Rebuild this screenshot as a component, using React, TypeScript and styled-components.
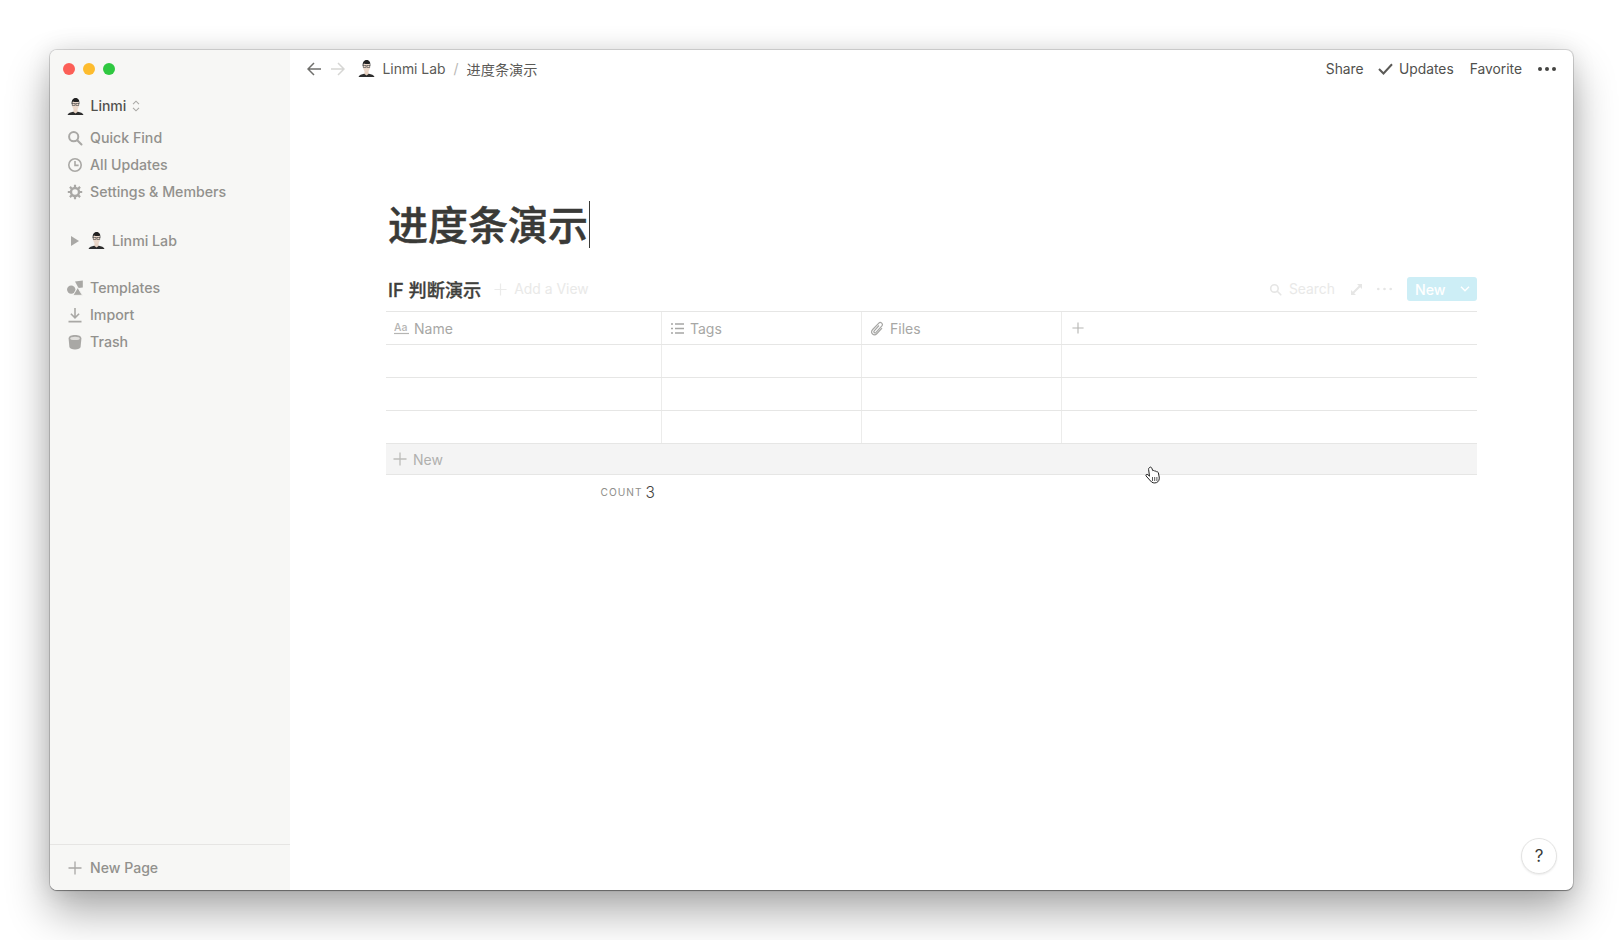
import React from "react";
import styled, { createGlobalStyle } from "styled-components";

const Global = createGlobalStyle`
  html, body { margin: 0; padding: 0; height: 100%; background: #fff; overflow: hidden; }
  body { font-family: Inter, "Noto Sans CJK SC", "Noto Sans", sans-serif; -webkit-font-smoothing: antialiased; }
`;
const Page = styled.div`
  width: 1623px; height: 940px; box-sizing: border-box; padding: 50px; background: #fff;
`;
const Win = styled.div`
  position: relative; width: 1523px; height: 840px; display: flex; border-radius: 7px; overflow: hidden;
  background: #fff;
  box-shadow: 0 0 0 1px rgba(0,0,0,.13), 0 1px 1px rgba(0,0,0,.35), 0 22px 44px rgba(0,0,0,.33), 0 0 24px rgba(0,0,0,.1);
`;
const Side = styled.aside`
  width: 240px; flex: none; background: #f7f7f5; display: flex; flex-direction: column;
`;
const Traffic = styled.div`
  height: 38px; display: flex; align-items: center; gap: 7.5px; padding-left: 12.5px; flex: none;
`;
const Dot = styled.span<{ $c: string }>`
  width: 12.5px; height: 12.5px; border-radius: 50%; background: ${p => p.$c};
`;
const Workspace = styled.div`
  height: 36px; flex: none; display: flex; align-items: center; padding-left: 17px;
  font-size: 14px; font-weight: 500; color: #52514d;
`;
const WsName = styled.span`margin: 0 6px 1px 6.5px;`;
const NavRow = styled.div<{ $indent?: boolean }>`
  height: 27px; flex: none; display: flex; align-items: center; gap: 7px;
  padding-left: ${p => (p.$indent ? 21 : 17)}px;
  font-size: 14.2px; font-weight: 500; color: #92918d;
`;
const NavGroup = styled.div<{ $mt: number }>`
  margin-top: ${p => p.$mt}px; flex: none; display: flex; flex-direction: column;
`;
const TreeIcon = styled.span`display: flex; margin-left: 2px;`;
const Spacer = styled.div`flex: 1;`;
const SideFoot = styled.div`
  height: 46px; flex: none; box-sizing: border-box; border-top: 1px solid #e6e5e3; display: flex; align-items: center; gap: 8px;
  padding-left: 18px; font-size: 14.1px; font-weight: 500; color: #92918d;
`;
const Main = styled.main`flex: 1; min-width: 0; display: flex; flex-direction: column;`;
const TopBar = styled.header`
  height: 37px; margin-bottom: 1px; flex: none; display: flex; align-items: center; justify-content: space-between; padding: 0 17.5px 0 17px;
`;
const Crumbs = styled.div`
  display: flex; align-items: center; font-size: 13.9px; color: #5b5a57;
`;
const CrumbArrows = styled.div`display: flex; align-items: center; gap: 10px; margin-right: 13px;`;
const CrumbName = styled.span`margin-left: 7.5px;`;
const Slash = styled.span`margin: 0 8px; color: #b9b8b5;`;
const CrumbPage = styled.span`font-size: 14.2px;`;
const Actions = styled.div`
  display: flex; align-items: center; font-size: 13.8px; color: #50504d;
`;
const Action = styled.span<{ $ml?: number }>`
  display: flex; align-items: center; gap: 6px; margin-left: ${p => p.$ml ?? 0}px;
`;
const Content = styled.div`padding: 0 96px; display: flex; flex-direction: column;`;
const Title = styled.h1`
  margin: 114px 0 0 2px; height: 48px; line-height: 48px; font-size: 40px; font-weight: 500; color: #3a3a37;
  -webkit-text-stroke: .5px #3a3a37;
  display: flex; align-items: center;
`;
const Caret = styled.span`
  width: 1px; height: 47px; background: #3a3a37; margin: -4px 0 0 1px;
`;
const ToolBar = styled.div`
  margin-top: 22px; height: 39px; box-sizing: border-box; padding-bottom: 5px; display: flex; align-items: center;
`;
const ViewTitle = styled.div`
  margin-left: 2px; font-size: 18.2px; font-weight: 500; color: #3f3f3c; line-height: 24px; margin-right: 13px; padding-top: 1px;
  -webkit-text-stroke: .3px #3f3f3c;
`;
const Faint = styled.span<{ $ml?: number }>`
  display: flex; align-items: center; gap: 7px; font-size: 13.9px; color: #e9e9e8;
  margin-left: ${p => p.$ml ?? 0}px;
`;
const ToolRight = styled.div`margin-left: auto; display: flex; align-items: center;`;
const NewBtn = styled.div`
  margin-left: 15px; width: 70px; height: 24px; box-sizing: border-box; padding: 0 7px 0 8px; border-radius: 3px; background: #cdeef6; color: #fff;
  font-size: 14.2px; font-weight: 500; display: flex; align-items: center; justify-content: space-between;
`;
const Table = styled.div`display: flex; flex-direction: column; border-top: 1px solid #e6e6e5;`;
const Row = styled.div`
  height: 33px; box-sizing: border-box; border-bottom: 1px solid #e6e6e5; display: grid; grid-template-columns: 276px 199.5px 200px 1fr;
`;
const Cell = styled.div<{ $pad?: number; $gap?: number }>`
  display: flex; align-items: center; gap: ${p => p.$gap ?? 6}px; padding-left: ${p => p.$pad ?? 8}px; border-right: 1px solid #ececeb;
  font-size: 14px; color: #a7a7a5;
  &:last-child { border-right: 0; }
`;
const AddRow = styled.div`
  height: 31px; box-sizing: border-box; background: #f4f4f4; border-bottom: 1px solid #e6e6e5; display: flex; align-items: center; gap: 6px;
  padding-left: 7px; font-size: 14px; color: #b0b0ae;
`;
const Footer = styled.div`
  display: flex; align-items: center; height: 34px; padding-left: 214.5px; gap: 3px;
`;
const CountLabel = styled.span`font-size: 10.2px; letter-spacing: 1px; color: #8f8f8c;`;
const CountVal = styled.span`font-size: 15.5px; font-weight: 300; color: #444441;`;
const Help = styled.div`
  position: absolute; right: 16px; bottom: 16px; width: 36px; height: 36px; box-sizing: border-box; border-radius: 50%;
  background: #fff; border: 1px solid #e3e3e2; box-shadow: 0 1px 2px rgba(0,0,0,.08);
  display: flex; align-items: center; justify-content: center; font-size: 17px; color: #3a3a37;
`;
const HandCursor = styled.svg`position: absolute; left: 1095px; top: 416px;`;

const G = "#a9a8a5";
const Avatar = ({ size = 17 }: { size?: number }) => (
  <svg width={size} height={size} viewBox="0 0 17 17">
    <path d="M0.5 17c.6-2 3.2-2.7 5.6-3.3h4.800c2.400.6 5 1.300 5.600 3.300z" fill="#2d2d2d" />
    <path d="M6.500 10.500h4v3.500l-2 1.400-2-1.400z" fill="#e8d2c2" />
    <ellipse cx="8.500" cy="6.800" rx="3.500" ry="5" fill="#ecd9cb" />
    <path d="M4.700 6.500C4.200 2.200 6 0 8.600 0c2.800 0 4.200 2.200 3.700 6.500l-.7-2.800c-1.800.5-3.900.4-5.700-.3z" fill="#222" />
    <rect x="5.200" y="5.600" width="2.800" height="1.900" fill="none" stroke="#444" strokeWidth=".6" />
    <rect x="9" y="5.600" width="2.800" height="1.900" fill="none" stroke="#444" strokeWidth=".6" />
  </svg>
);
const SearchIco = ({ c = G, s = 16 }: { c?: string; s?: number }) => (
  <svg width={s} height={s} viewBox="0 0 16 16" fill="none" stroke={c} strokeWidth="2">
    <circle cx="6.700" cy="6.700" r="4.600" />
    <path d="M10.200 10.200l4.300 4.300" strokeLinecap="round" />
  </svg>
);
const ClockIco = () => (
  <svg width="16" height="16" viewBox="0 0 16 16" fill="none" stroke={G} strokeWidth="1.600">
    <circle cx="8" cy="8" r="6.200" />
    <path d="M8 4v4.400h3.600" />
  </svg>
);
const GearIco = () => (
  <svg width="16" height="16" viewBox="0 0 16 16" fill="none" stroke={G}>
    <circle cx="8" cy="8" r="4" strokeWidth="2.400" />
    <path d="M8 .8v2.600M8 12.600v2.600M.8 8h2.600M12.600 8h2.600M2.900 2.900l1.900 1.900M11.200 11.200l1.900 1.900M2.900 13.100l1.900-1.900M11.200 4.800l1.900-1.900" strokeWidth="2.200" />
  </svg>
);
const Tri = () => (
  <svg width="8" height="10" viewBox="0 0 8 10"><path d="M0 0l8 5-8 5z" fill={G} /></svg>
);
const TemplatesIco = () => (
  <svg width="16" height="16" viewBox="0 0 16 16" fill={G}>
    <circle cx="4.200" cy="9.600" r="4.200" />
    <path d="M8 1.500L15.800.6v7l-4.300.5z" />
    <path d="M10.700 7.500l4.700 7.800H6z" stroke="#f7f7f5" strokeWidth=".8" />
  </svg>
);
const ImportIco = () => (
  <svg width="16" height="16" viewBox="0 0 16 16" fill="none" stroke={G} strokeWidth="1.600">
    <path d="M8 1v9.500M3.900 6.700L8 10.800l4.100-4.100M1.500 14.600h13" />
  </svg>
);
const TrashIco = () => (
  <svg width="16" height="16" viewBox="0 0 16 16">
    <path d="M1.600 4.500C1.600 2 4.500 1 8 1s6.400 1 6.400 3.500L13.600 13c-.3 1.600-2.600 2.400-5.600 2.400S2.700 14.600 2.400 13z" fill={G} />
    <ellipse cx="8" cy="4.400" rx="4.800" ry="1.700" fill="#e0dfdc" />
  </svg>
);
const Plus = ({ c = G, s = 14 }: { c?: string; s?: number }) => (
  <svg width={s} height={s} viewBox="0 0 14 14" fill="none" stroke={c} strokeWidth="1.300"><path d="M7 .5v13M.5 7h13" /></svg>
);
const Updown = () => (
  <svg width="8" height="12" viewBox="0 0 8 12" fill="none" stroke="#a9a8a5" strokeWidth="1.100">
    <path d="M1 4.200L4 1.200l3 3M1 7.800l3 3 3-3" />
  </svg>
);
const Arrow = ({ c, flip }: { c: string; flip?: boolean }) => (
  <svg width="14" height="14" viewBox="0 0 14 14" fill="none" stroke={c} strokeWidth="1.500" style={flip ? { transform: "scaleX(-1)" } : undefined}>
    <path d="M14 7H1.200M7 1L1 7l6 6" />
  </svg>
);
const Check = () => (
  <svg width="15" height="12" viewBox="0 0 15 12" fill="none" stroke="#5b5a57" strokeWidth="2"><path d="M1 6l4.500 4.500L14 1.300" /></svg>
);
const Dots = ({ c, w = 18, r = 2 }: { c: string; w?: number; r?: number }) => (
  <svg width={w} height="6" viewBox={`0 0 ${w} 6`} fill={c}>
    <circle cx={r} cy="3" r={r} /><circle cx={w / 2} cy="3" r={r} /><circle cx={w - r} cy="3" r={r} />
  </svg>
);
const Expand = () => (
  <svg width="11" height="11" viewBox="0 0 11 11" fill="#e6e6e5"><path d="M6 0h5v5L9.200 3.200 3.200 9.200 5 11H0V6l1.800 1.800 6-6z" /></svg>
);
const Chevron = () => (
  <svg width="10" height="6" viewBox="0 0 10 6" fill="none" stroke="#fff" strokeWidth="1.500"><path d="M1 .8l4 4 4-4" /></svg>
);
const AaIco = () => (
  <svg width="15" height="14" viewBox="0 0 15 14">
    <text x="0" y="9.500" fontFamily="Inter, sans-serif" fontSize="10.500" fontWeight="500" fill="#b5b5b3">Aa</text>
    <path d="M0 12.500h15" stroke="#b5b5b3" strokeWidth="1.200" />
  </svg>
);
const ListIco = () => (
  <svg width="13" height="11" viewBox="0 0 13 11" fill="none" stroke="#a7a7a5" strokeWidth="1.300">
    <path d="M0 1h2M4 1h9M0 5.500h2M4 5.500h9M0 10h2M4 10h9" />
  </svg>
);
const ClipIco = () => (
  <svg width="14" height="15" viewBox="0 0 14 15" fill="none" stroke="#a7a7a5" strokeWidth="1.200">
    <path d="M9 4.500l-4.800 5.300c-1 1.200.6 2.700 1.800 1.500l5.700-6.100c2-2.200-1-5-3.100-2.900L2.700 8.500c-3 3.300 1.200 7.200 4.300 4l5-5.300" />
  </svg>
);

const Hand = () => (
  <HandCursor width="17" height="19" viewBox="0 0 17 19">
    <path d="M4.500 1.500c.9-.8 1.900-.3 2.300.7l1 2.500c.8-.5 1.700-.1 2 .5.700-.3 1.500 0 1.800.6.900-.2 1.600.3 1.800 1.100l.8 4.100c.4 2.600-.6 4.800-2.700 5.600-2.300.8-4.700.2-5.900-1.600L1.100 10c-.8-1.200.7-2.300 1.800-1.300l1.600 1.500L3.600 3.400c-.1-.8.3-1.500.9-1.900z" fill="#fff" stroke="#222" strokeWidth="1" />
    <path d="M7.500 11v4M9.700 11v4M11.900 11v4" stroke="#444" strokeWidth=".9" />
  </HandCursor>
);

const NAV_TOP: [React.ReactNode, string][] = [
  [<SearchIco />, "Quick Find"],
  [<ClockIco />, "All Updates"],
  [<GearIco />, "Settings & Members"],
];
const NAV_BOTTOM: [React.ReactNode, string][] = [
  [<TemplatesIco />, "Templates"],
  [<ImportIco />, "Import"],
  [<TrashIco />, "Trash"],
];

export default function App() {
  return (
    <Page>
      <Global />
      <Win>
        <Side>
          <Traffic>
            <Dot $c="#fc5f57" />
            <Dot $c="#fdbc2e" />
            <Dot $c="#2fc840" />
          </Traffic>
          <Workspace>
            <Avatar />
            <WsName>Linmi</WsName>
            <Updown />
          </Workspace>
          <NavGroup $mt={0}>
            {NAV_TOP.map(([i, t]) => (
              <NavRow key={t}>{i}<span>{t}</span></NavRow>
            ))}
          </NavGroup>
          <NavGroup $mt={22}>
            <NavRow $indent>
              <Tri />
              <TreeIcon><Avatar /></TreeIcon>
              <span>Linmi Lab</span>
            </NavRow>
          </NavGroup>
          <NavGroup $mt={20}>
            {NAV_BOTTOM.map(([i, t]) => (
              <NavRow key={t}>{i}<span>{t}</span></NavRow>
            ))}
          </NavGroup>
          <Spacer />
          <SideFoot>
            <Plus s={14} />
            <span>New Page</span>
          </SideFoot>
        </Side>
        <Main>
          <TopBar>
            <Crumbs>
              <CrumbArrows>
                <Arrow c="#6f6f6c" />
                <Arrow c="#d6d6d4" flip />
              </CrumbArrows>
              <Avatar />
              <CrumbName>Linmi Lab</CrumbName>
              <Slash>/</Slash>
              <CrumbPage>进度条演示</CrumbPage>
            </Crumbs>
            <Actions>
              <Action>Share</Action>
              <Action $ml={14.5}><Check />Updates</Action>
              <Action $ml={16}>Favorite</Action>
              <Action $ml={15.5}><Dots c="#444441" /></Action>
            </Actions>
          </TopBar>
          <Content>
            <Title>进度条演示<Caret /></Title>
            <ToolBar>
              <ViewTitle>IF 判断演示</ViewTitle>
              <Faint><Plus c="#ebebea" s={13} />Add a View</Faint>
              <ToolRight>
                <Faint><SearchIco c="#e6e6e5" s={13} />Search</Faint>
                <Faint $ml={16}><Expand /></Faint>
                <Faint $ml={15}><Dots c="#e6e6e5" w={15} r={1.3} /></Faint>
                <NewBtn>New<Chevron /></NewBtn>
              </ToolRight>
            </ToolBar>
            <Table>
              <Row>
                <Cell $gap={5}><AaIco /><span>Name</span></Cell>
                <Cell $pad={9}><ListIco /><span>Tags</span></Cell>
                <Cell $gap={6.5}><ClipIco /><span>Files</span></Cell>
                <Cell $pad={10}><Plus c="#b5b5b3" s={12} /></Cell>
              </Row>
              {[0, 1, 2].map(i => (
                <Row key={i}><Cell /><Cell /><Cell /><Cell /></Row>
              ))}
              <AddRow><Plus c="#bdbdbb" s={14} />New</AddRow>
            </Table>
            <Footer>
              <CountLabel>COUNT</CountLabel>
              <CountVal>3</CountVal>
            </Footer>
          </Content>
        </Main>
        <Help>?</Help>
        <Hand />
      </Win>
    </Page>
  );
}
